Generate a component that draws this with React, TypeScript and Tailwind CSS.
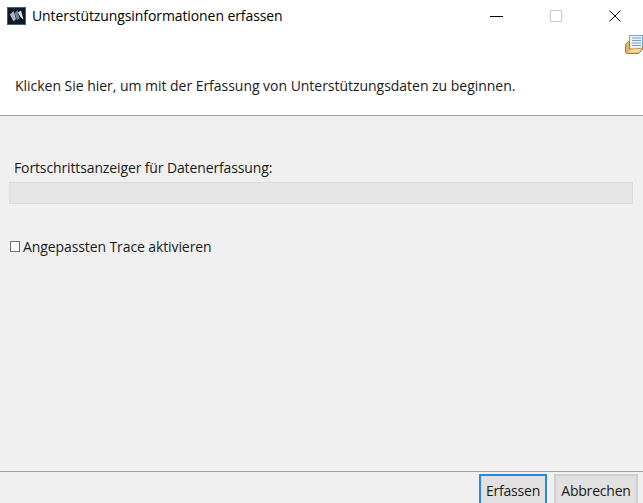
import React from 'react';

const font = { fontFamily: '"Open Sans", "Noto Sans", sans-serif' };

function AppIcon() {
    return (
        <svg width="19" height="18" viewBox="0 0 19 18" className="shrink-0">
            <rect x="0.5" y="0.5" width="18" height="17" fill="#0e1a28" stroke="#2f5f8c" />
            <path d="M3 7.5 L6.5 4 L9 12 L6.5 14.5 Z" fill="#aeb8c4" />
            <path d="M7.5 6 L10.5 3.5 L12.5 11.5 L10 13 Z" fill="#6f8298" />
            <path d="M11 5.5 L14 3.5 L16.5 12.5 L13.5 10 Z" fill="#dde4ea" />
        </svg>
    );
}

function ReportIcon() {
    return (
        <svg width="18" height="19" viewBox="0 0 18 19">
            <rect x="4.5" y="0.5" width="13" height="14" fill="#eaf1f9" stroke="#7ba3cf" />
            <path d="M7 3h9M7 5.5h9M7 8h9M7 10.5h9" stroke="#7f9cc0" strokeWidth="1" />
            <path d="M0.5 9.5 L3.5 6.5 L4.5 6.5 L4.5 14 L11 14 L18 13 L14 18.5 L1.5 18.5 L0.5 17 Z" fill="#e8b665" stroke="#b0762c" />
            <path d="M3 17.5 L6 14.5 L17 13.5 L14 17.5 Z" fill="#f6d894" />
        </svg>
    );
}

export default function App() {
    return (
        <div className="flex h-[503px] w-[643px] flex-col overflow-hidden bg-[#f0f0f0] text-[14px] text-[#1a1a1a]" style={font}>
            {/* Title bar + header */}
            <div className="flex h-[116px] flex-col border-b border-[#a0a0a0] bg-white">
                <div className="flex h-[32px] items-center pl-[7px]">
                    <AppIcon />
                    <span className="mb-[2px] ml-[6px] text-[14px] tracking-[-0.09px] text-black">Unterstützungsinformationen erfassen</span>
                    <div className="ml-auto flex items-center">
                        <div className="h-px w-[13px] bg-black" />
                        <div className="ml-[47px] h-[12px] w-[12px] border border-[#cccccc]" />
                        <svg width="12" height="12" viewBox="0 0 12 12" className="ml-[47px] mr-[22px]">
                            <path d="M0.5 0.5 L11.5 11.5 M11.5 0.5 L0.5 11.5" stroke="#111" strokeWidth="1" />
                        </svg>
                    </div>
                </div>
                <div className="flex h-[43px] justify-end pt-[3px]">
                    <ReportIcon />
                </div>
                <div className="tracking-[-0.03px]">
                    <span className="pl-[15px]">Klicken Sie hier, um mit der Erfassung von Unterstützungsdaten zu beginnen.</span>
                </div>
            </div>

            {/* Content */}
            <div className="flex flex-1 flex-col px-[9px]">
                <div className="mt-[41px] pl-[5px] tracking-[-0.125px]">Fortschrittsanzeiger für Datenerfassung:</div>
                <div className="mt-[4px] h-[22px] w-[624px] border border-[#dadada] bg-[#e6e6e6]" />
                <div className="mt-[32px] flex items-center">
                    <div className="ml-[1px] h-[11px] w-[10px] border border-[#707070] bg-white" />
                    <span className="ml-[3px] tracking-[-0.1px]">Angepassten Trace aktivieren</span>
                </div>
            </div>

            {/* Footer */}
            <div className="flex h-[32px] justify-end gap-[7px] border-t border-[#a0a0a0] pr-[5px] pt-[2px]">
                <button className="h-[32px] w-[68px] border-2 border-[#2b88d8] bg-[#e1e1e1] tracking-[-0.2px]">Erfassen</button>
                <button className="h-[32px] w-[84px] border-2 border-[#d0d0d0] bg-[#e1e1e1] tracking-[-0.2px]">Abbrechen</button>
            </div>
        </div>
    );
}
